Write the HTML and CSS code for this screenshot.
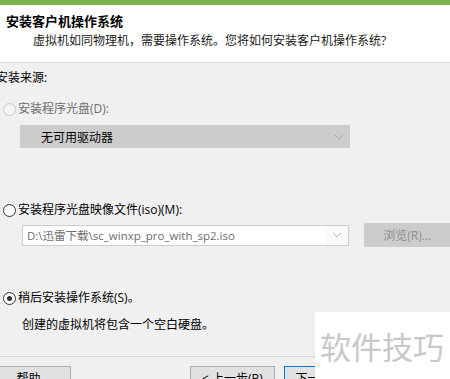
FILE: index.html
```html
<!DOCTYPE html>
<html lang="zh-CN">
<head>
    <meta charset="UTF-8">
    <meta name="viewport" content="width=device-width, initial-scale=1.0">
    <title>新建虚拟机向导</title>
    <link rel="stylesheet" href="styles.css">
</head>
<body>
    <div class="wizard">
        <div class="topbar"></div>
        <div class="head">
            <h1>安装客户机操作系统</h1>
            <p>虚拟机如同物理机，需要操作系统。您将如何安装客户机操作系统?</p>
        </div>
        <div class="content">
            <div class="group-label">安装来源:</div>
            <label class="option disabled">
                <span class="radio"></span>安装程序光盘(D):
            </label>
            <div class="select disabled">
                <span>无可用驱动器</span>
                <svg class="chevron" width="10" height="6" viewBox="0 0 10 6"><path d="M1 1 L5 5 L9 1" fill="none" stroke="#a6a6a6" stroke-width="1"/></svg>
            </div>
            <label class="option option-iso">
                <span class="radio"></span>安装程序光盘映像文件(iso)(M):
            </label>
            <div class="path-row">
                <div class="combo">
                    <span class="combo-text">D:\迅雷下载\sc_winxp_pro_with_sp2.iso</span>
                    <svg class="chevron" width="10" height="6" viewBox="0 0 10 6"><path d="M1 1 L5 5 L9 1" fill="none" stroke="#b4b4b4" stroke-width="1"/></svg>
                </div>
                <button type="button" class="btn browse">浏览(R)...</button>
            </div>
            <label class="option option-later">
                <span class="radio checked"></span>稍后安装操作系统(S)。
            </label>
            <p class="note">创建的虚拟机将包含一个空白硬盘。</p>
        </div>
        <div class="foot">
            <button type="button" class="btn help">帮助</button>
            <div class="nav">
                <button type="button" class="btn back">&lt; 上一步(B)</button>
                <button type="button" class="btn next">下一步(N) &gt;</button>
            </div>
        </div>
        <div class="watermark">软件技巧</div>
    </div>
</body>
</html>
```

FILE: styles.css
```css
body {
    margin: 0;
    padding: 0;
    background-color: #f0f0f0;
    font-family: "Open Sans", "Noto Sans CJK SC", sans-serif;
    font-size: 12px;
    color: #000;
}
.wizard {
    position: relative;
    width: 450px;
    height: 379px;
    overflow: hidden;
    background-color: #f0f0f0;
}
.topbar {
    height: 5px;
    background-color: #7cb14b;
}
.head {
    height: 56px;
    background-color: #fff;
    border-bottom: 1px solid #d8d8d8;
    padding-top: 8px;
    box-sizing: border-box;
    height: 58px;
}
.head h1 {
    margin: 0 0 0 6px;
    font-size: 13px;
    line-height: 16px;
    font-weight: bold;
}
.head p {
    margin: 4px 0 0 33px;
    line-height: 16px;
    font-size: 12px;
    color: #1a1a1a;
}
.content {
    padding-top: 7px;
}
.group-label {
    margin-left: -4px;
    line-height: 16px;
}
.option {
    display: flex;
    align-items: center;
    gap: 2px;
    margin-top: 15px;
    margin-left: 3px;
    line-height: 16px;
}
.option.disabled {
    color: #6d6d6d;
}
.option-iso {
    margin-top: 54px;
}
.option-later {
    margin-top: 43px;
}
.radio {
    width: 11px;
    height: 11px;
    border: 1px solid #333;
    border-radius: 50%;
    background-color: #fff;
    position: relative;
}
.option.disabled .radio {
    border-color: #c6c6c6;
    background-color: #f4f4f4;
}
.radio.checked::after {
    content: "";
    position: absolute;
    left: 3px;
    top: 3px;
    width: 5px;
    height: 5px;
    border-radius: 50%;
    background-color: #333;
}
.select {
    display: flex;
    align-items: center;
    justify-content: space-between;
    margin: 8px 0 0 20px;
    width: 330px;
    height: 23px;
    padding: 0 6px 0 21px;
    box-sizing: border-box;
    background-color: #cccccc;
}
.path-row {
    display: flex;
    align-items: center;
    margin-top: 5px;
    height: 24px;
}
.combo {
    display: flex;
    align-items: center;
    justify-content: space-between;
    margin-left: 22px;
    width: 329px;
    height: 21px;
    box-sizing: border-box;
    border: 1px solid #cdcdcd;
    background-color: #fafafa;
    padding-right: 6px;
}
.combo-text {
    flex: 0 0 303px;
    height: 19px;
    line-height: 19px;
    padding-left: 4px;
    box-sizing: border-box;
    background-color: #fff;
    color: #6d6d6d;
    font-size: 11.5px;
}
.btn {
    font-family: "Open Sans", "Noto Sans CJK SC", sans-serif;
    font-size: 12px;
    height: 24px;
    padding: 0;
    border: 1px solid #adadad;
    background-color: #e1e1e1;
    color: #000;
}
.browse {
    margin-left: 15px;
    width: 86px;
    border-color: #cccccc;
    background-color: #cccccc;
    color: #8c8c8c;
}
.note {
    margin: 11px 0 0 22px;
    line-height: 16px;
}
.foot {
    display: flex;
    margin-top: 23px;
    border-top: 1px solid #d5d5d5;
    padding-top: 9px;
}
.help {
    margin-left: -14px;
    width: 85px;
}
.nav {
    display: flex;
    gap: 9px;
    margin-left: 119px;
}
.back {
    width: 85px;
}
.next {
    width: 85px;
    border-color: #0078d7;
}
.watermark {
    position: absolute;
    left: 315px;
    top: 312px;
    width: 135px;
    height: 67px;
    background-color: #fff;
    color: #c8c8c8;
    font-family: "Noto Sans CJK SC", sans-serif;
    font-size: 31px;
    line-height: 34px;
    padding: 17px 0 0 5px;
    box-sizing: border-box;
    letter-spacing: 0;
}
```
